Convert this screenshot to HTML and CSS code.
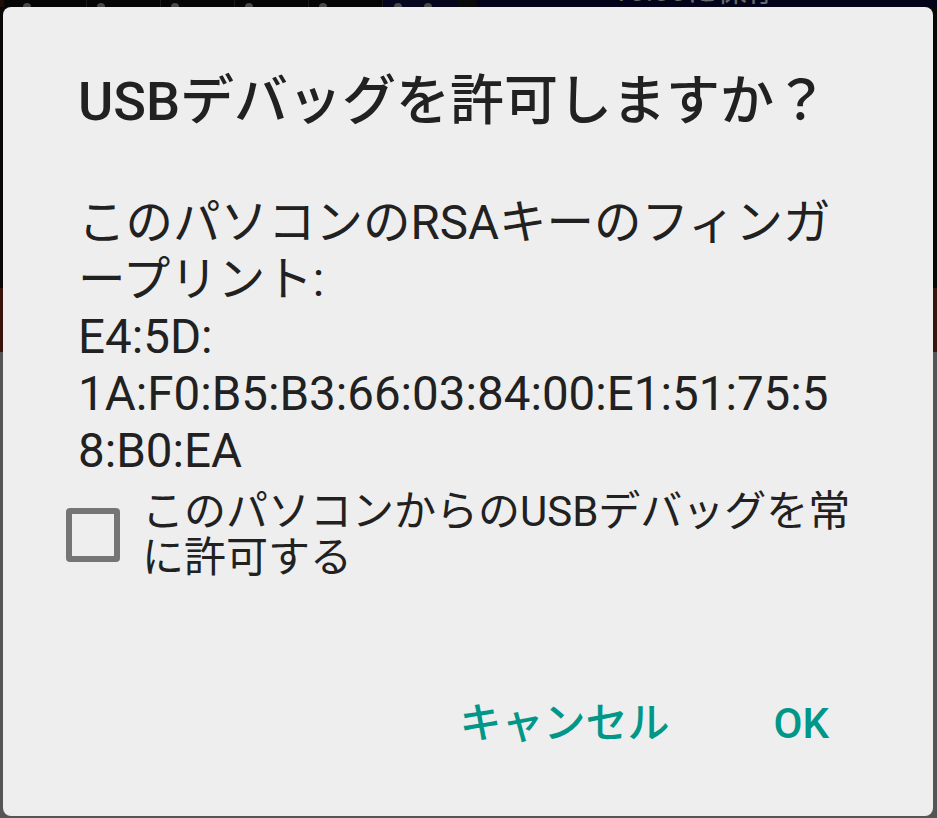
FILE: index.html
```html
<!DOCTYPE html>
<html lang="ja">
<head>
<meta charset="utf-8">
<title>USBデバッグを許可しますか？</title>
<link rel="stylesheet" href="styles.css">
</head>
<body>
<div class="status">
  <div class="seg seg-edge"></div>
  <div class="seg seg-app"><span class="dot"></span></div>
  <div class="seg seg-app"><span class="dot"></span></div>
  <div class="seg seg-app"><span class="dot"></span></div>
  <div class="seg seg-app"><span class="dot"></span></div>
  <div class="seg seg-app"><span class="dot"></span></div>
  <div class="seg seg-navy"><span class="dot"></span><span class="dot"></span></div>
  <div class="seg seg-black"></div>
  <div class="seg seg-wide"><span class="ghost">10:00に保存</span></div>
</div>
<div class="dialog">
  <h1 class="title">USBデバッグを許可しますか？</h1>
  <p class="message">このパソコンのRSAキーのフィンガ<br>ープリント:<br>E4:5D:<br>1A:F0:B5:B3:66:03:84:00:E1:51:75:5<br>8:B0:EA</p>
  <label class="check">
    <span class="box"></span>
    <span class="check-label">このパソコンからのUSBデバッグを常<br>に許可する</span>
  </label>
  <div class="actions">
    <span class="btn">キャンセル</span>
    <span class="btn btn-ok">OK</span>
  </div>
</div>
</body>
</html>
```

FILE: styles.css
```css
html, body {
  margin: 0;
  padding: 0;
}
body {
  width: 937px;
  height: 818px;
  overflow: hidden;
  font-family: Roboto, "Noto Sans CJK JP", sans-serif;
  background: linear-gradient(to bottom, #0b0606 0, #0b0606 288px, #3a140c 288px, #3a140c 352px, #555555 352px, #555555 100%);
}
.status {
  height: 7px;
  display: flex;
  overflow: hidden;
  background: #060606;
}
.seg {
  height: 7px;
  flex: none;
  display: flex;
  gap: 22px;
  box-sizing: border-box;
}
.seg-edge {
  width: 13px;
  background: linear-gradient(to right, #1e0c09 0, #1e0c09 4px, #060606 4px);
}
.seg-app {
  width: 74px;
  padding-left: 10px;
  border-right: 1px solid #1c1c1c;
}
.seg-navy {
  width: 74px;
  padding-left: 11px;
  background: #05051e;
}
.seg-black {
  width: 20px;
  background: #0a0a0a;
}
.seg-wide {
  flex: 1;
  background: #02021a;
  padding-left: 135px;
}
.dot {
  width: 8px;
  height: 8px;
  margin-top: 3px;
  border-radius: 50%;
  background: #4a4a4a;
  flex: none;
}
.ghost {
  display: block;
  margin-top: -24px;
  font-size: 30px;
  line-height: 30px;
  color: #6a6a6a;
  white-space: nowrap;
}
.dialog {
  margin-left: 3px;
  width: 930px;
  height: 809px;
  box-sizing: border-box;
  padding: 64.5px 0 0 75px;
  background: #eeeeee;
  border-radius: 8px;
  display: flex;
  flex-direction: column;
  color: #212121;
}
.title {
  margin: 0;
  font-size: 54px;
  line-height: 60px;
  font-weight: 500;
  white-space: nowrap;
}
.message {
  margin: 63px 0 0;
  font-size: 47.5px;
  line-height: 57px;
  font-weight: 400;
  white-space: nowrap;
}
.check {
  margin: 9px 0 0 -12px;
  display: flex;
  align-items: center;
  gap: 22px;
}
.box {
  width: 54px;
  height: 54px;
  box-sizing: border-box;
  border: 6px solid #757575;
  border-radius: 4px;
  flex: none;
}
.check-label {
  font-size: 42px;
  line-height: 46px;
  white-space: nowrap;
}
.actions {
  margin-top: 119px;
  display: flex;
  justify-content: flex-end;
  gap: 104px;
  padding-right: 104px;
}
.btn {
  font-size: 42px;
  line-height: 48px;
  font-weight: 500;
  color: #009688;
  white-space: nowrap;
}
```
